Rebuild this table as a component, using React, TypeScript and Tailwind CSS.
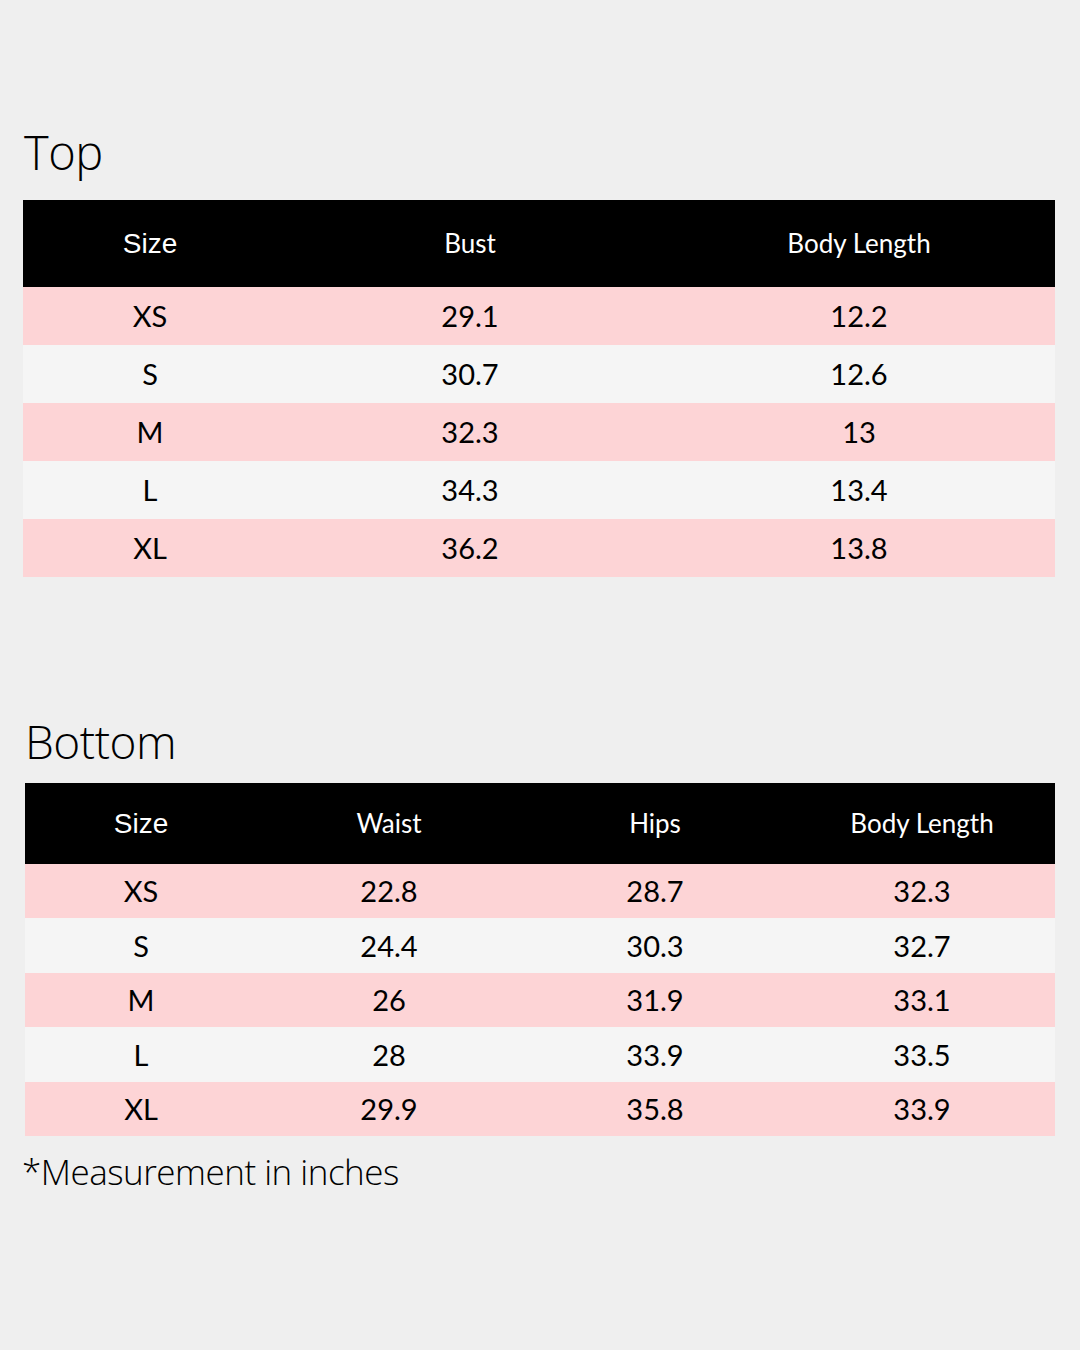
const topRows = [
  ['XS', '29.1', '12.2'],
  ['S', '30.7', '12.6'],
  ['M', '32.3', '13'],
  ['L', '34.3', '13.4'],
  ['XL', '36.2', '13.8'],
];

const bottomRows = [
  ['XS', '22.8', '28.7', '32.3'],
  ['S', '24.4', '30.3', '32.7'],
  ['M', '26', '31.9', '33.1'],
  ['L', '28', '33.9', '33.5'],
  ['XL', '29.9', '35.8', '33.9'],
];

const bodyFont = "font-['Lato','Open_Sans',sans-serif]";
const titleFont = "font-['Open_Sans','Liberation_Sans',sans-serif] font-light";

export default function App() {
  return (
    <div className="h-[1350px] w-[1080px] bg-[#efefef] text-black">
      <div className="pl-[23px] pr-[25px] pt-[122px]">
        <h2 className={`${titleFont} ml-[1px] text-[47px] leading-[60px] tracking-[-0.5px]`}>Top</h2>
        <div className="mt-[18px]">
          <div className="flex h-[87px] items-center bg-black text-white">
            <div className="w-[254px] text-center font-['Liberation_Sans',sans-serif] text-[28px]">Size</div>
            <div className={`w-[386px] text-center ${bodyFont} text-[26px]`}>Bust</div>
            <div className={`flex-1 text-center ${bodyFont} text-[26px]`}>Body Length</div>
          </div>
          {topRows.map((row, i) => (
            <div
              key={row[0]}
              className={`flex h-[58px] items-center ${bodyFont} text-[29px] ${i % 2 === 0 ? 'bg-[#fdd4d6]' : 'bg-[#f5f5f5]'}`}
            >
              <div className="w-[254px] text-center">{row[0]}</div>
              <div className="w-[386px] text-center">{row[1]}</div>
              <div className="flex-1 text-center">{row[2]}</div>
            </div>
          ))}
        </div>
      </div>

      <div className="pl-[25px] pr-[25px] pt-[134px]">
        <h2 className={`${titleFont} text-[46px] leading-[60px] tracking-[-0.5px]`}>Bottom</h2>
        <div className="mt-[12px]">
          <div className="flex h-[81px] items-center bg-black text-white">
            <div className="w-[232px] text-center font-['Liberation_Sans',sans-serif] text-[28px]">Size</div>
            <div className={`w-[264px] text-center ${bodyFont} text-[26px]`}>Waist</div>
            <div className={`w-[268px] text-center ${bodyFont} text-[26px]`}>Hips</div>
            <div className={`flex-1 text-center ${bodyFont} text-[26px]`}>Body Length</div>
          </div>
          {bottomRows.map((row, i) => (
            <div
              key={row[0]}
              className={`flex h-[54.4px] items-center ${bodyFont} text-[29px] ${i % 2 === 0 ? 'bg-[#fdd4d6]' : 'bg-[#f5f5f5]'}`}
            >
              <div className="w-[232px] text-center">{row[0]}</div>
              <div className="w-[264px] text-center">{row[1]}</div>
              <div className="w-[268px] text-center">{row[2]}</div>
              <div className="flex-1 text-center">{row[3]}</div>
            </div>
          ))}
        </div>
        <p className={`${titleFont} -ml-[3px] mt-[14px] text-[35px] leading-[44px] tracking-[-0.5px]`}>
          *Measurement in inches
        </p>
      </div>
    </div>
  );
}
